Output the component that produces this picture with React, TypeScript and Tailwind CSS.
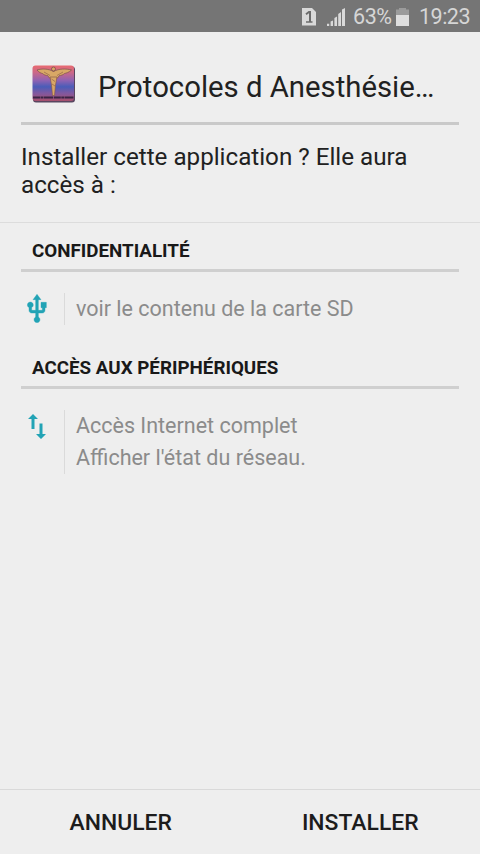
import type { ReactNode } from 'react';

function StatusBar() {
  return (
    <div className="flex h-8 shrink-0 items-center justify-end bg-[#757575] pr-[11px] pt-[2px] text-[#d6d6d6]">
      <svg className="mr-[11px] mb-[1px] h-[18px] w-[14px]" viewBox="0 0 14 18">
        <path d="M0 0h10l4 4v13.500H0z" fill="#d9d9d9" />
        <path d="M4 6.200L7 4h1v10" fill="none" stroke="#6b6b6b" strokeWidth="2" />
        <path d="M4 14h6.500" stroke="#6b6b6b" strokeWidth="1.500" />
      </svg>
      <svg className="mr-[8px] mb-[1px] h-[18px] w-[18px]" viewBox="0 0 18 18">
        <path d="M0 15.800h2.200V18H0zM3.600 13.500l2.400-1V18H3.600zM7.400 10l2.600-1.500V18H7.400zM11.200 6l2.800-2v14h-2.800zM15 1.500L18 0v18h-3z" fill="#d9d9d9" />
      </svg>
      <span className="w-[40px] whitespace-nowrap text-[21.5px] tracking-[-0.4px]">63%</span>
      <svg className="ml-[3px] mr-[10px] mb-[1px] h-[18px] w-[13px]" viewBox="0 0 13 18">
        <path d="M3 0h7v1.500h3V7H0V1.500h3z" fill="#9b9b9b" />
        <path d="M0 7h13v11H0z" fill="#dedede" />
      </svg>
      <span className="w-[50px] whitespace-nowrap text-[21.5px] tracking-[-0.5px]">19:23</span>
    </div>
  );
}

function AppIcon() {
  return (
    <svg className="h-[38px] w-[44px] shrink-0" viewBox="0 0 44 38">
      <defs>
        <linearGradient id="sky" x1="0" y1="0" x2="0" y2="1">
          <stop offset="0" stopColor="#e86a70" />
          <stop offset="0.2" stopColor="#cb6888" />
          <stop offset="0.42" stopColor="#9062b2" />
          <stop offset="0.6" stopColor="#4a5cb8" />
          <stop offset="0.78" stopColor="#8058a0" />
          <stop offset="1" stopColor="#a8506c" />
        </linearGradient>
      </defs>
      <rect x="1" y="1.500" width="42" height="36" rx="3" fill="#594660" />
      <rect x="0.500" y="0.500" width="41.500" height="35.500" rx="3" fill="url(#sky)" />
      <path d="M5 5C10 3.500 16 3.500 21.500 6.500 27 3.500 34 3.500 39.500 5 37 7.500 34 8.200 32.500 8.500 31 10 29 10.500 27.500 10.500L25 13.500h-7L15.500 10.500C14 10.500 12 10 10.500 8.500 9 8.200 7 7.500 5 5z" fill="#d9a866" stroke="#7a5050" strokeWidth="0.700" />
      <path d="M18 12h7l-1.500 8-1 10.500h-2L19.500 20z" fill="#d9a866" stroke="#7d5348" strokeWidth="0.600" />
      <path d="M12 7l6 3.500M31 7l-6 3.500M19.500 14l3.500 2.500M20 19l3 2" stroke="#94664c" strokeWidth="0.700" />
      <circle cx="21.500" cy="4" r="2" fill="#d9a866" stroke="#6e4747" strokeWidth="0.700" />
      <path d="M1 32.500h40.500" stroke="#3a2445" strokeWidth="1.800" strokeDasharray="7 0.500 3 0.500 9 0.800" />
    </svg>
  );
}

function UsbIcon() {
  return (
    <svg className="h-[32px] w-[32px]" viewBox="0 0 24 24" fill="#22a3b5" stroke="#22a3b5" strokeWidth="0.300">
      <path d="M15 7v4h1v2h-3V5h2l-3-4-3 4h2v8H8v-2.070c.7-.37 1.200-1.080 1.200-1.930 0-1.210-.99-2.200-2.200-2.200-1.210 0-2.200.99-2.200 2.200 0 .85.5 1.560 1.200 1.930V13c0 1.110.89 2 2 2h3v3.050c-.71.37-1.200 1.100-1.200 1.950 0 1.220.99 2.200 2.200 2.200 1.210 0 2.200-.98 2.200-2.200 0-.85-.49-1.580-1.200-1.950V15h3c1.110 0 2-.89 2-2v-2h1V7h-4z" />
    </svg>
  );
}

function NetworkIcon() {
  return (
    <svg className="mt-[4px] h-[25px] w-[18px]" viewBox="0 0 18 25" fill="#22a3b5">
      <path d="M5 0l5 5H6.500v10h-3V5H0z" />
      <path d="M13 25l-5-5h3.500V9.500h3V20H18z" />
    </svg>
  );
}

function Section({ title, icon, children }: { title: string; icon: ReactNode; children: ReactNode }) {
  return (
    <section className="px-[21px]">
      <h2 className="flex h-[49px] items-center border-b-[3px] border-[#cfcfcf] pl-[11px] pt-[11px] text-[18.8px] font-bold text-[#191919]">
        {title}
      </h2>
      <div className="flex pt-[21px]">
        <div className="flex w-[43px] shrink-0 justify-center pr-[11px]">{icon}</div>
        <div className="border-l border-[#dadada] pl-[11px] text-[21.5px] leading-8 text-[#8b8b8b]">{children}</div>
      </div>
    </section>
  );
}

export default function App() {
  return (
    <main className="flex h-[854px] w-[480px] flex-col overflow-hidden bg-[#eeeeee] font-['Roboto',sans-serif] text-[#212121]">
      <StatusBar />
      <header className="mx-[21px] flex h-[93px] shrink-0 items-center border-b-[3px] border-[#c9c9c9] pl-[11px] pt-[14px]">
        <AppIcon />
        <h1 className="ml-[22px] whitespace-nowrap pt-[7px] text-[29.3px]">Protocoles d Anesthésie…</h1>
      </header>
      <p className="h-[98px] shrink-0 border-b border-[#dcdcdc] px-[21px] pt-[18px] text-[24.2px] leading-[28px]">
        Installer cette application ? Elle aura
        <br />
        accès à :
      </p>
      <Section title="CONFIDENTIALITÉ" icon={<UsbIcon />}>
        <p>voir le contenu de la carte SD</p>
      </Section>
      <div className="h-[15px]" />
      <Section title="ACCÈS AUX PÉRIPHÉRIQUES" icon={<NetworkIcon />}>
        <p>Accès Internet complet</p>
        <p>Afficher l'état du réseau.</p>
      </Section>
      <footer className="mt-auto grid h-[65px] shrink-0 grid-cols-2 border-t border-[#d9d9d9] pl-[1px] pt-[3px] text-[22.9px] font-medium text-[#1c1c1c]">
        <button>ANNULER</button>
        <button>INSTALLER</button>
      </footer>
    </main>
  );
}
